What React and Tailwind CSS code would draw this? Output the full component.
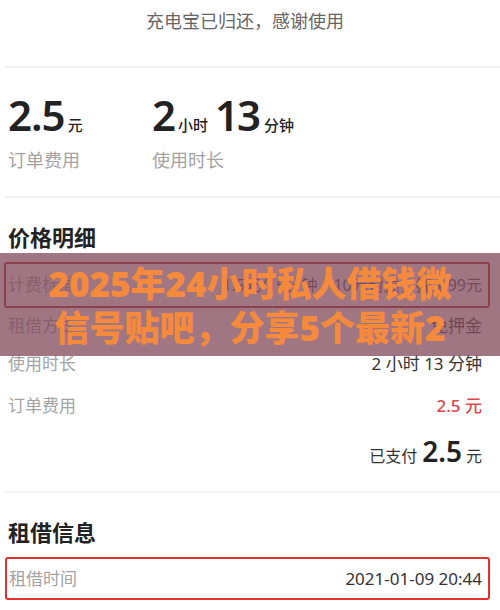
export default function App() {
  const font = { fontFamily: '"Noto Sans", "Noto Sans CJK SC", sans-serif' };

  return (
    <div
      className="relative w-[500px] h-[610px] overflow-hidden bg-white text-[#333]"
      style={font}
    >
      {/* return notice */}
      <div className="h-[66px] flex justify-center pt-[8px] pr-[10px]">
        <span className="text-[18px] leading-[26px] text-[#666]">充电宝已归还，感谢使用</span>
      </div>
      <div className="ml-[5px] h-[2px] bg-[#f1f1f1]" />

      {/* summary */}
      <div className="flex pl-[8px] pt-[26px] pb-[27px]">
        <div className="w-[144px] flex flex-col gap-[15px]">
          <div className="flex items-baseline h-[42px] text-[#222]">
            <span className="text-[42px] leading-none font-semibold tracking-[-1px]">2.5</span>
            <span className="ml-[3px] text-[15px] leading-none font-medium">元</span>
          </div>
          <span className="text-[18px] leading-[18px] text-[#a3a3a3]">订单费用</span>
        </div>
        <div className="flex flex-col gap-[15px]">
          <div className="flex items-baseline h-[42px] text-[#222]">
            <span className="text-[42px] leading-none font-semibold">2</span>
            <span className="ml-[2px] text-[15px] leading-none font-medium">小时</span>
            <span className="ml-[7px] text-[42px] leading-none font-semibold tracking-[-2px]">13</span>
            <span className="ml-[5px] text-[15px] leading-none font-medium">分钟</span>
          </div>
          <span className="text-[18px] leading-[18px] text-[#a3a3a3]">使用时长</span>
        </div>
      </div>
      <div className="ml-[5px] h-[2px] bg-[#f1f1f1]" />

      {/* price detail */}
      <div className="pt-[28px]">
        <h2 className="pl-[8px] text-[22px] leading-[22px] font-bold text-[#222]">价格明细</h2>
        <div className="mt-[14px] ml-[4px] mr-[10px] h-[46px] border-2 border-[#b3262a] rounded-[3px] flex items-center justify-between pl-[2px] pr-[6px]">
          <span className="text-[17px] text-[#a3a3a3]">计费标准</span>
          <span className="text-[16px] text-[#555]">1.5元/15分钟，10元封顶，押金99元</span>
        </div>
        <div className="h-[36px] flex items-center justify-between pl-[8px] pr-[18px]">
          <span className="text-[17px] text-[#a3a3a3]">租借方式</span>
          <span className="text-[17px] text-[#444]">免押金</span>
        </div>
        <div className="h-[40px] flex items-center justify-between pl-[8px] pr-[18px]">
          <span className="text-[17px] text-[#a3a3a3]">使用时长</span>
          <span className="text-[17px] text-[#333]">2 小时 13 分钟</span>
        </div>
        <div className="h-[44px] flex items-center justify-between pl-[8px] pr-[18px]">
          <span className="text-[17px] text-[#a3a3a3]">订单费用</span>
          <span className="text-[17px] font-medium text-[#d9464b]">2.5 元</span>
        </div>
        <div className="h-[48px] flex items-center justify-end pr-[18px]">
          <div className="flex items-baseline text-[#333]">
            <span className="text-[16px]">已支付</span>
            <span className="ml-[5px] text-[28px] leading-none font-semibold text-[#222]">2.5</span>
            <span className="ml-[4px] text-[16px]">元</span>
          </div>
        </div>
      </div>
      <div className="mt-[15px] ml-[5px] h-[2px] bg-[#f3f3f3]" />

      {/* rental info */}
      <div className="pt-[28px]">
        <h2 className="pl-[8px] text-[22px] leading-[22px] font-bold text-[#222]">租借信息</h2>
        <div className="mt-[14px] ml-[5px] mr-[10px] h-[43px] border-2 border-[#e5312c] rounded-[3px] flex items-center justify-between pl-[2px] pr-[6px]">
          <span className="text-[17px] text-[#a3a3a3]">租借时间</span>
          <span className="text-[17px] text-[#333]">2021-01-09 20:44</span>
        </div>
      </div>

      {/* title banner over the page */}
      <div className="absolute left-0 top-[253px] w-full h-[103px] bg-[rgba(128,72,90,0.75)] pt-[9px] text-center">
        <div className="text-[35px] leading-[44px] font-black text-[#f58a3c] whitespace-nowrap">
          2025年24小时私人借钱微
        </div>
        <div className="text-[35px] leading-[44px] font-black text-[#f58a3c] whitespace-nowrap">
          信号贴吧，分享5个最新2
        </div>
      </div>
    </div>
  );
}
